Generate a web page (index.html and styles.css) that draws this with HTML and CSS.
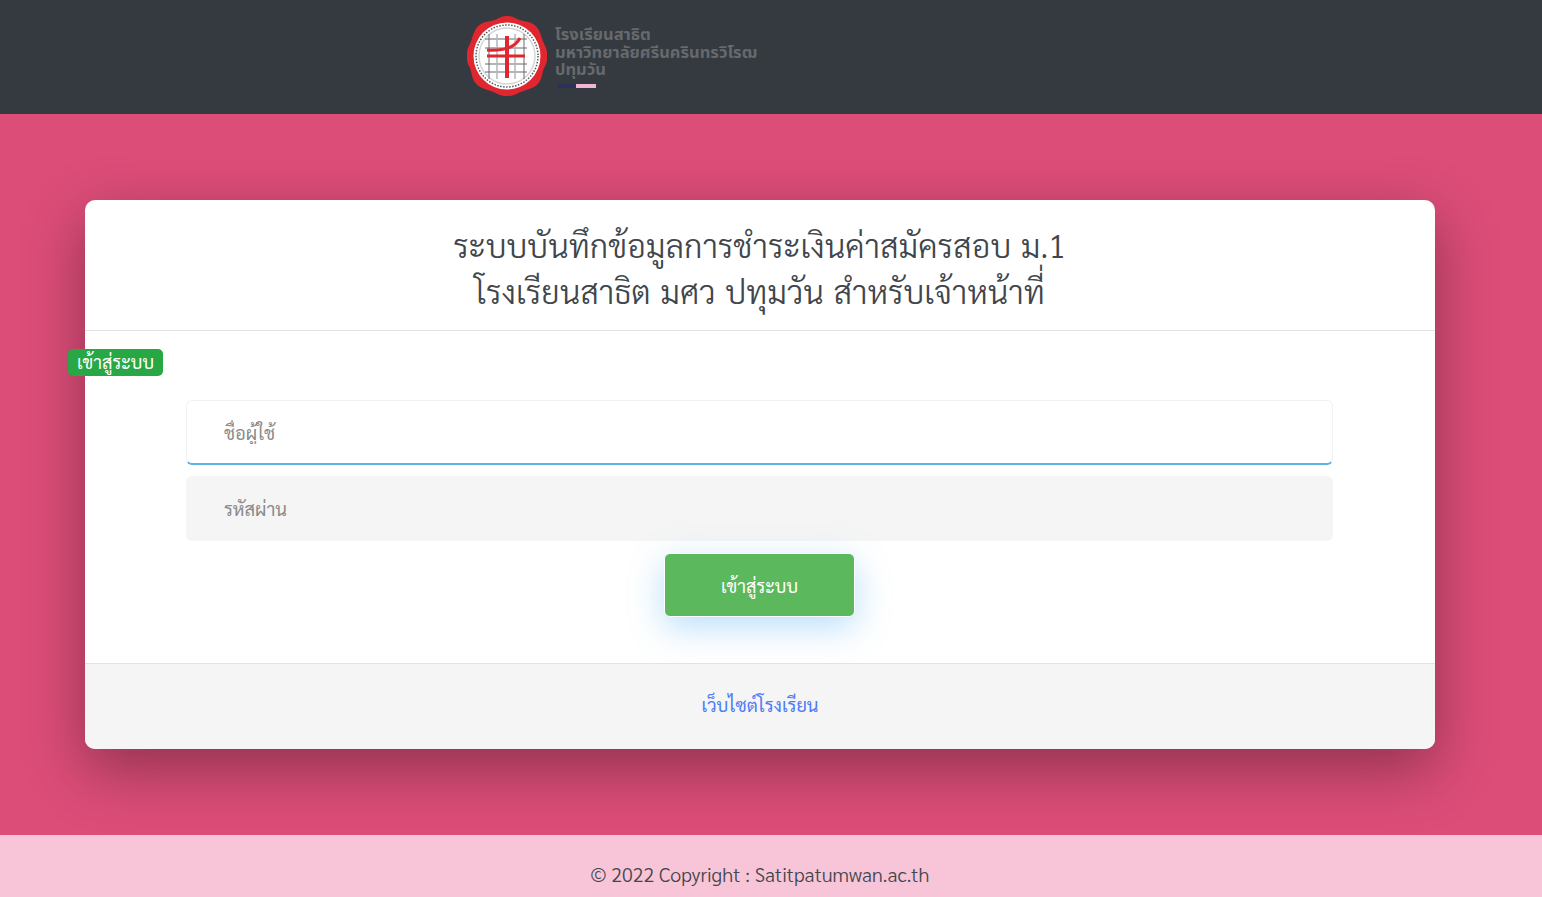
FILE: index.html
```html
<!DOCTYPE html>
<html lang="th">
<head>
    <meta charset="UTF-8">
    <meta name="viewport" content="width=device-width, initial-scale=1.0">
    <title>ระบบบันทึกข้อมูลการชำระเงินค่าสมัครสอบ</title>
    <link rel="stylesheet" href="styles.css">
</head>
<body>
    <header class="topbar">
        <div class="brand">
            <svg class="brand-logo" width="80" height="80" viewBox="0 0 80 80">
                <path transform="translate(40 40) scale(1.026) translate(-40 -40)" d="M40 1 C47 1 50 5 56 6 C63 7 68 9 71 15 C74 20 74 25 77 30 C80 35 80 45 77 50 C74 55 75 61 71 66 C67 71 62 72 56 74 C50 76 47 79 40 79 C33 79 30 76 24 74 C18 72 13 71 9 66 C5 61 6 55 3 50 C0 45 0 35 3 30 C6 25 6 20 9 15 C12 9 17 7 24 6 C30 5 33 1 40 1 Z" fill="#e0262e"/>
                <circle cx="40" cy="40" r="33.500" fill="#fff"/>
                <circle cx="40" cy="40" r="31" fill="none" stroke="#55585c" stroke-width="1.500" stroke-dasharray="1.500 1.500"/>
                <circle cx="40" cy="40" r="28" fill="none" stroke="#d5d5d5" stroke-width="1.500"/>
                <g stroke="#66696e" stroke-width="1">
                    <path d="M18 23 H60 M18 32 H60 M18 48 H60 M18 56 H60"/>
                    <path d="M22 18 V63 M57 18 V63"/>
                </g>
                <path d="M30 18 V63 M48 18 V63" stroke="#b4b6b8" stroke-width="1.500"/>
                <g fill="none" stroke="#e0262e">
                    <path d="M40 20 V62" stroke-width="4"/>
                    <path d="M20 34 C36 35 48 32 53 22" stroke-width="3"/>
                    <path d="M20 40 H58" stroke-width="3"/>
                </g>
            </svg>
            <div class="brand-text">
                <div>โรงเรียนสาธิต</div>
                <div>มหาวิทยาลัยศรีนครินทรวิโรฒ</div>
                <div>ปทุมวัน</div>
                <div class="brand-rule"><span class="rule-navy"></span><span class="rule-pink"></span></div>
            </div>
        </div>
    </header>

    <main class="page">
        <section class="card">
            <div class="card-head">
                <h1>ระบบบันทึกข้อมูลการชำระเงินค่าสมัครสอบ ม.1<br>โรงเรียนสาธิต มศว ปทุมวัน สำหรับเจ้าหน้าที่</h1>
            </div>
            <div class="card-body">
                <span class="badge">เข้าสู่ระบบ</span>
                <form class="login-form" onsubmit="event.preventDefault();">
                    <input type="text" class="field field-focus" placeholder="ชื่อผู้ใช้">
                    <input type="password" class="field" placeholder="รหัสผ่าน">
                    <button type="submit" class="btn-login">เข้าสู่ระบบ</button>
                </form>
            </div>
            <div class="card-foot">
                <a href="#">เว็บไซต์โรงเรียน</a>
            </div>
        </section>
    </main>

    <footer class="copyright">© 2022 Copyright : Satitpatumwan.ac.th</footer>
</body>
</html>
```

FILE: styles.css
```css
* {
    box-sizing: border-box;
}
body {
    margin: 0;
    font-family: Sarabun, "Noto Sans Thai Looped", "Noto Sans", sans-serif;
    color: #40464c;
    overflow: hidden;
}
.topbar {
    height: 114px;
    background: #343a40;
    padding: 16px 0 0 467px;
}
.brand {
    display: flex;
    gap: 8px;
}
.brand-logo {
    flex: none;
}
.brand-text {
    padding-top: 9px;
    font-family: "Noto Sans", "Noto Sans Thai", sans-serif;
    font-size: 16.500px;
    line-height: 17.500px;
    font-weight: 700;
    color: #66696e;
}
.brand-rule {
    display: flex;
    height: 4px;
    margin: 6.500px 0 0 2px;
}
.rule-navy {
    width: 19px;
    background: #2d3058;
}
.rule-pink {
    width: 20px;
    background: #f0b4d4;
}
.page {
    height: 721px;
    background: #dc4d78;
    padding: 86px 107px 86px 85px;
}
.card {
    height: 549px;
    background: #fff;
    border-radius: 10px;
    box-shadow: 0 20px 60px rgba(0, 0, 0, 0.35);
    display: flex;
    flex-direction: column;
}
.card-head {
    height: 131px;
    border-bottom: 1px solid #e3e3e3;
    padding-top: 22px;
}
.card-head h1 {
    margin: 0;
    font-size: 32.400px;
    line-height: 46px;
    font-weight: 300;
    word-spacing: 1.600px;
    text-align: center;
    padding-right: 1px;
}
.card-body {
    flex: 1;
    position: relative;
    padding: 69px 102px 0 101px;
}
.badge {
    position: absolute;
    left: -17px;
    top: 18px;
    width: 95px;
    height: 27px;
    background: #28a745;
    color: #fff;
    border-radius: 5px;
    font-size: 18px;
    line-height: 26px;
    text-align: center;
}
.login-form {
    display: flex;
    flex-direction: column;
    align-items: center;
}
.field {
    width: 100%;
    height: 65px;
    margin-bottom: 11px;
    padding: 0 37px 2px;
    border: 1px solid transparent;
    border-radius: 6px;
    background: #f5f5f5;
    font-family: inherit;
    font-size: 18.300px;
    outline: none;
}
.field::placeholder {
    color: #8a8a8a;
}
.field-focus {
    background: #fff;
    border-color: #f2f2f2;
    border-bottom: 2px solid #5cb3e6;
    padding-bottom: 0;
}
.btn-login {
    width: 191px;
    height: 64px;
    margin-top: 1px;
    background: #5cb85c;
    color: #fff;
    border: 1px solid #fff;
    border-radius: 6px;
    font-family: inherit;
    font-size: 18px;
    box-shadow: 0 10px 34px rgba(51, 159, 240, 0.34);
}
.card-foot {
    height: 86px;
    background: #f5f5f5;
    border-top: 1px solid #e3e3e3;
    border-radius: 0 0 10px 10px;
    text-align: center;
    padding-top: 25px;
    font-size: 18.300px;
    line-height: 30px;
}
.card-foot a {
    color: #4d7cf5;
    text-decoration: none;
}
.copyright {
    height: 62px;
    background: #f8c4d8;
    text-align: center;
    font-size: 19.700px;
    line-height: 78px;
    font-weight: 300;
    padding-right: 22px;
}
```
